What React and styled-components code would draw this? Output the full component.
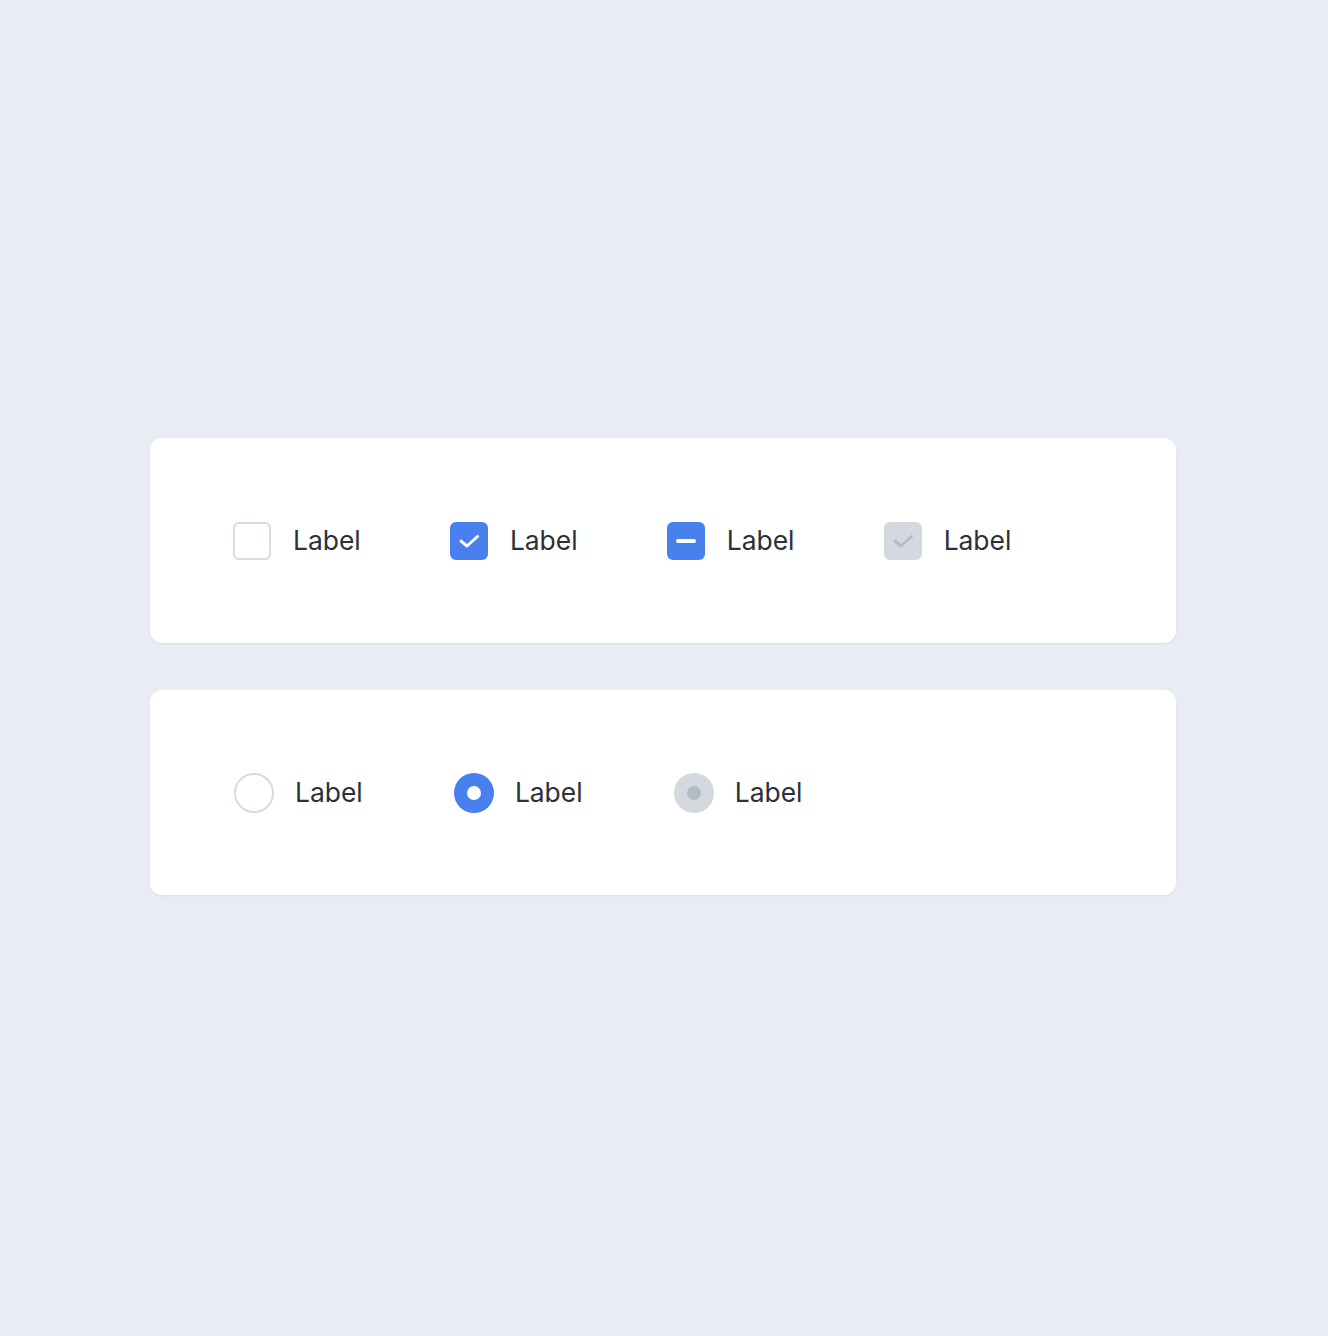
import React from "react";
import styled, { createGlobalStyle } from "styled-components";

const Global = createGlobalStyle`
  html, body { margin: 0; padding: 0; }
  body {
    background: #e9ecf4;
    font-family: Inter, "Noto Sans", sans-serif;
  }
`;

const Page = styled.div`
  min-height: 1336px;
  padding: 438px 152px 0 150px;
  box-sizing: border-box;
  display: flex;
  flex-direction: column;
  gap: 47px;
`;

const Card = styled.div`
  background: #ffffff;
  border-radius: 12px;
  height: 205px;
  box-sizing: border-box;
  padding: 0 ${(p) => p.$pad}px;
  display: flex;
  align-items: center;
  gap: ${(p) => p.$gap}px;
  box-shadow: 0 1px 2px rgba(30, 40, 70, 0.08);
`;

const Item = styled.label`
  display: flex;
  align-items: center;
  gap: ${(p) => p.$gap}px;
`;

const Box = styled.span`
  width: 38px;
  height: 38px;
  box-sizing: border-box;
  border-radius: 6px;
  display: flex;
  align-items: center;
  justify-content: center;
  background: ${(p) =>
    p.$variant === "on" ? "#4880ee" : p.$variant === "disabled" ? "#d4d9e0" : "#ffffff"};
  border: ${(p) => (p.$variant === "off" ? "2px solid #d7dce3" : "none")};
`;

const Dash = styled.span`
  width: 20px;
  height: 4px;
  border-radius: 2px;
  background: #ffffff;
`;

const Circle = styled.span`
  width: 40px;
  height: 40px;
  box-sizing: border-box;
  border-radius: 50%;
  display: flex;
  align-items: center;
  justify-content: center;
  background: ${(p) =>
    p.$variant === "on" ? "#4880ee" : p.$variant === "disabled" ? "#d4d9e0" : "#ffffff"};
  border: ${(p) => (p.$variant === "off" ? "2px solid #d7dce3" : "none")};
`;

const Dot = styled.span`
  width: 14px;
  height: 14px;
  border-radius: 50%;
  background: ${(p) => (p.$variant === "disabled" ? "#b3bbc7" : "#ffffff")};
`;

const Text = styled.span`
  font-family: Inter, "Noto Sans", sans-serif;
  font-size: 26.4px;
  color: #2b3039;
  line-height: 1;
`;

const Check = ({ color }) => (
  <svg width="38" height="38" viewBox="0 0 38 38" fill="none">
    <path
      d="M11 19.2 L17 24 L27.5 14.5"
      stroke={color}
      strokeWidth="3"
      strokeLinecap="round"
      strokeLinejoin="round"
    />
  </svg>
);

export default function App() {
  return (
    <>
      <Global />
      <Page>
        <Card $gap={89.2} $pad={83}>
          <Item $gap={22}>
            <Box $variant="off" />
            <Text>Label</Text>
          </Item>
          <Item $gap={22}>
            <Box $variant="on">
              <Check color="#ffffff" />
            </Box>
            <Text>Label</Text>
          </Item>
          <Item $gap={22}>
            <Box $variant="on">
              <Dash />
            </Box>
            <Text>Label</Text>
          </Item>
          <Item $gap={22}>
            <Box $variant="disabled">
              <Check color="#b3bbc7" />
            </Box>
            <Text>Label</Text>
          </Item>
        </Card>
        <Card $gap={91.2} $pad={84}>
          <Item $gap={21}>
            <Circle $variant="off" />
            <Text>Label</Text>
          </Item>
          <Item $gap={21}>
            <Circle $variant="on">
              <Dot />
            </Circle>
            <Text>Label</Text>
          </Item>
          <Item $gap={21}>
            <Circle $variant="disabled">
              <Dot $variant="disabled" />
            </Circle>
            <Text>Label</Text>
          </Item>
        </Card>
      </Page>
    </>
  );
}
